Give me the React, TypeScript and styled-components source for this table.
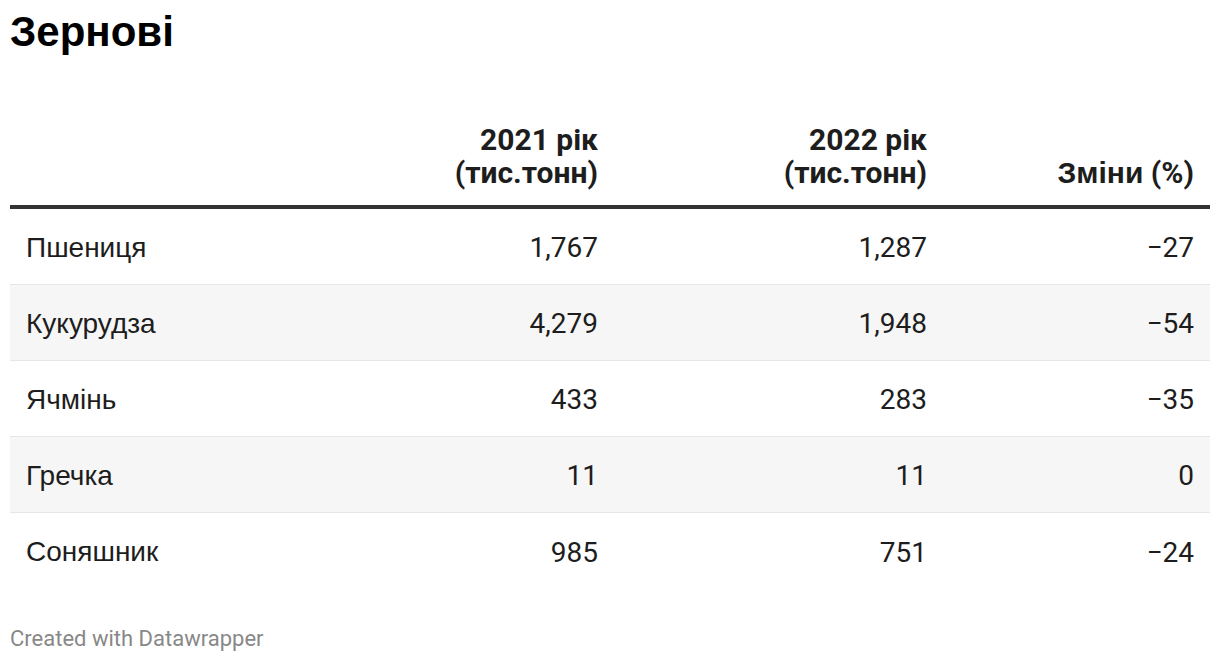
import React from "react";
import styled, { createGlobalStyle } from "styled-components";

const Global = createGlobalStyle`
  *, *::before, *::after { box-sizing: border-box; }
  html, body { margin: 0; padding: 0; background: #ffffff; }
  body { font-family: Roboto, "Liberation Sans", sans-serif; color: #1d1d1d; }
`;

const Page = styled.div`
  padding: 0 10px;
  display: flex;
  flex-direction: column;
`;

const Title = styled.h1`
  margin: 8px 0 0;
  font-family: "Liberation Sans", Arial, sans-serif;
  font-weight: 700;
  font-size: 42px;
  line-height: 48px;
  color: #000;
`;

const Table = styled.div`
  margin-top: 67px;
  display: grid;
  grid-template-columns: 275px 329px 329px 267px;
`;

const HeadRow = styled.div`
  display: contents;
`;

const HeadCell = styled.div`
  display: flex;
  flex-direction: column;
  justify-content: flex-end;
  align-items: flex-end;
  text-align: right;
  padding: 0 16px 16px;
  border-bottom: 4px solid #333333;
  font-family: Roboto, "Liberation Sans", sans-serif;
  font-weight: 700;
  font-size: 30px;
  line-height: 33px;
  color: #1d1d1d;
`;

const Cyr = styled.span`
  font-family: "Liberation Sans", Arial, sans-serif;
`;

const Row = styled.div<{ $striped: boolean; $last: boolean }>`
  display: contents;
  & > div {
    background: ${(p) => (p.$striped ? "#f6f6f6" : "#ffffff")};
    border-bottom: ${(p) => (p.$last ? "none" : "1px solid #e6e6e6")};
    height: 76px;
  }
`;

const LabelCell = styled.div`
  display: flex;
  align-items: center;
  padding: 2px 16px 0;
  font-family: "Liberation Sans", Arial, sans-serif;
  font-size: 28px;
  color: #1d1d1d;
`;

const NumCell = styled.div`
  display: flex;
  align-items: center;
  justify-content: flex-end;
  padding: 2px 16px 0;
  font-family: Roboto, sans-serif;
  font-size: 28px;
  color: #1d1d1d;
`;

const Footer = styled.div`
  margin-top: 38px;
  font-family: Roboto, sans-serif;
  font-size: 22px;
  line-height: 24px;
  color: #888888;
`;

const rows = [
  ["Пшениця", "1,767", "1,287", "−27"],
  ["Кукурудза", "4,279", "1,948", "−54"],
  ["Ячмінь", "433", "283", "−35"],
  ["Гречка", "11", "11", "0"],
  ["Соняшник", "985", "751", "−24"],
];

export default function App() {
  return (
    <Page>
      <Global />
      <Title>Зернові</Title>
      <Table>
        <HeadRow>
          <HeadCell />
          <HeadCell>
            <span>2021 рік</span>
            <span>(тис.тонн)</span>
          </HeadCell>
          <HeadCell>
            <span>2022 рік</span>
            <span>(тис.тонн)</span>
          </HeadCell>
          <HeadCell>
            <span>
              <Cyr>Зміни</Cyr> (%)
            </span>
          </HeadCell>
        </HeadRow>
        {rows.map((r, i) => (
          <Row key={r[0]} $striped={i % 2 === 1} $last={i === rows.length - 1}>
            <LabelCell>{r[0]}</LabelCell>
            <NumCell>{r[1]}</NumCell>
            <NumCell>{r[2]}</NumCell>
            <NumCell>{r[3]}</NumCell>
          </Row>
        ))}
      </Table>
      <Footer>Created with Datawrapper</Footer>
    </Page>
  );
}
